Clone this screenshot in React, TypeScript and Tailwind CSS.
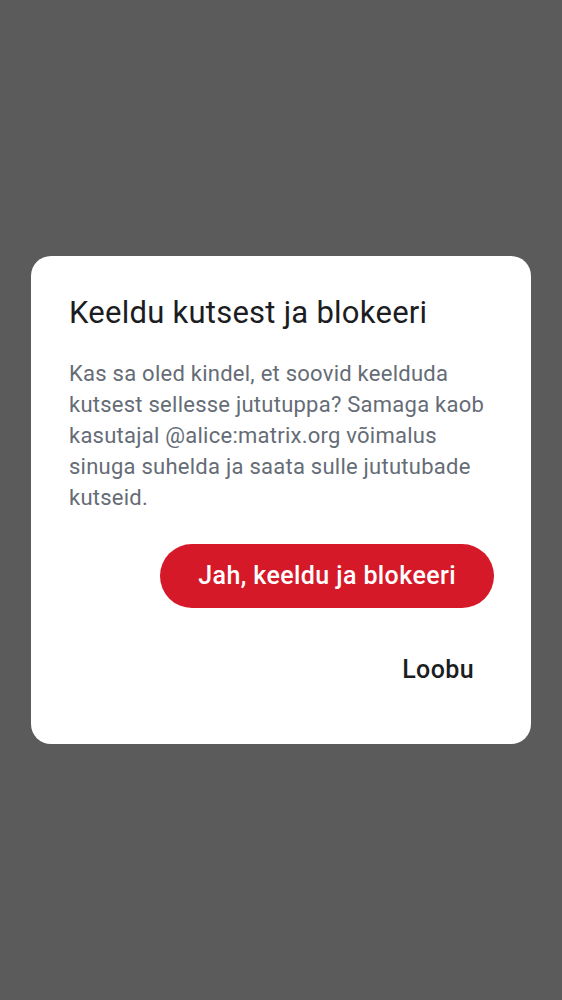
import React from "react";

export default function App() {
  return (
    <div
      className="w-[562px] h-[1000px] bg-[#5b5b5b] flex items-center justify-center"
      style={{ fontFamily: "Roboto, 'Noto Sans', sans-serif" }}
    >
      <div className="w-[500px] bg-white rounded-[20px] pt-[37px] pb-[42px] pl-[38px] pr-[37px] flex flex-col">
        <h1 className="text-[31px] leading-[40px] tracking-[0.25px] text-[#1b1d22] font-normal">
          Keeldu kutsest ja blokeeri
        </h1>
        <p className="mt-[25px] text-[22px] leading-[31px] tracking-[0.25px] text-[#656c76]">
          Kas sa oled kindel, et soovid keelduda kutsest sellesse jututuppa? Samaga kaob kasutajal @alice:matrix.org võimalus sinuga suhelda ja saata sulle jututubade kutseid.
        </p>
        <div className="mt-[31px] flex flex-col items-end gap-[30px]">
          <button className="h-[64px] px-[38px] rounded-full bg-[#d51928] text-white text-[25px] tracking-[0.4px] font-medium">
            Jah, keeldu ja blokeeri
          </button>
          <button className="h-[64px] px-[20px] text-[25px] tracking-[0.4px] font-medium text-[#1b1d22]">
            Loobu
          </button>
        </div>
      </div>
    </div>
  );
}
